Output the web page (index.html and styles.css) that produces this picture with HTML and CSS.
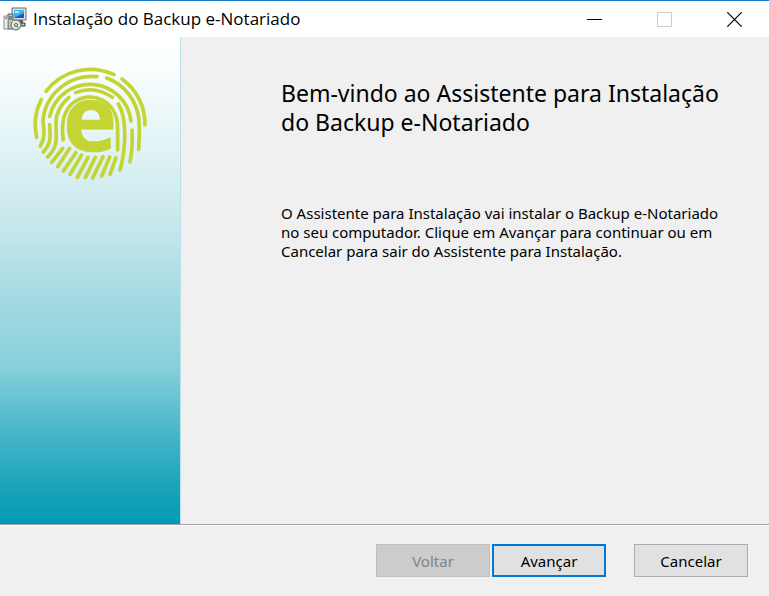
FILE: index.html
```html
<!DOCTYPE html>
<html lang="pt-BR">
<head>
<meta charset="utf-8">
<title>Instalação do Backup e-Notariado</title>
<link rel="stylesheet" href="styles.css">
</head>
<body>
<div class="window">
  <header class="titlebar">
    <svg class="app-icon" viewBox="0 0 24 24" aria-hidden="true">
      <path d="M9 1h14v12H9z" fill="#dfe0e2" stroke="#6a6c70"/>
      <path d="M11 3h10v8H11z" fill="#1457c8"/>
      <path d="M11 3h10v3l-10 5z" fill="#3cb4f8"/>
      <path d="M12 4h4v2h-4z" fill="#a8ecff"/>
      <path d="M16 13h4v3h-4z" fill="#666"/>
      <path d="M13 16h9v3h-9z" fill="#c5c5c5" stroke="#333"/>
      <path d="M5 7h5v15H5z" fill="#c4c4c4" stroke="#555"/>
      <path d="M1 9h4v13H1z" fill="#eee" stroke="#888"/>
      <path d="M2 11h2M6 10h3M6 12h3" stroke="#444"/>
      <circle cx="13" cy="18" r="5" fill="#dbe8df" stroke="#586068"/>
      <path d="M13 18l-4-3 2-2z" fill="#f6e685"/>
      <path d="M13 18l4 3-2 2z" fill="#7ac08b"/>
      <circle cx="13" cy="18" r="1.5" fill="#fff" stroke="#555"/>
    </svg>
    <h1 class="title">Instalação do Backup e-Notariado</h1>
    <div class="window-controls">
      <button class="control" type="button" aria-label="Minimizar"><svg viewBox="0 0 15 15"><path d="M0 7.5h15" stroke="#000"/></svg></button>
      <button class="control" type="button" aria-label="Maximizar" disabled><svg viewBox="0 0 15 15"><path d="M.5.5h14v14H.5z" stroke="#ccc" fill="none"/></svg></button>
      <button class="control" type="button" aria-label="Fechar"><svg viewBox="0 0 15 15"><path d="M.3.3l14.4 14.4M14.7.3L.3 14.7" stroke="#000" stroke-width="1.2"/></svg></button>
    </div>
  </header>
  <main class="content">
    <aside class="banner">
      <svg class="logo" viewBox="0 -54 396 486" role="img" aria-label="e-Notariado">
        <g class="ridges">
          <path d="M66 94A167 167 0 0 1 270 44"/>
          <path d="M294 57A167 167 0 0 1 363 195"/>
          <path d="M52 118A167 167 0 0 0 38 232"/>
          <path d="M219 50A147 147 0 0 0 57 180C57 205 68 225 49 258"/>
          <path d="M248 54A148 148 0 0 1 345 180Q348 225 344 268"/>
          <path d="M77 169A124 124 0 0 1 321 183"/>
          <path d="M77 194C77 225 86 245 58 276"/>
          <path d="M324 210Q327 260 318 306"/>
          <path d="M135 112Q96 145 96 190C96 240 104 256 71 291"/>
          <path d="M155 98Q210 75 265 112"/>
          <path d="M283 132C310 175 306 265 288 330"/>
          <path d="M118 240C112 200 115 155 148 128C200 88 281 120 281 205V270"/>
          <path d="M116 265L83 307M137 265L101 320M156 278L118 333M173 285L138 343M192 292L160 352M214 292L184 353M237 290L206 354M257 291L233 348M276 293L258 343"/>
        </g>
        <text class="logo-letter" x="198" y="274">e</text>
      </svg>
    </aside>
    <section class="page">
      <h2 class="heading">Bem-vindo ao Assistente para Instalação do Backup e-Notariado</h2>
      <p class="message">O Assistente para Instalação vai instalar o Backup e-Notariado no seu computador. Clique em Avançar para continuar ou em Cancelar para sair do Assistente para Instalação.</p>
    </section>
  </main>
  <footer class="actions">
    <button class="button" type="button" disabled>Voltar</button>
    <button class="button primary" type="button">Avançar</button>
    <button class="button cancel" type="button">Cancelar</button>
  </footer>
</div>
</body>
</html>
```
FILE: styles.css
```css
* {
  box-sizing: border-box;
}

body {
  margin: 0;
  background: #f0f0f0;
  color: #000;
  font-family: "Noto Sans", sans-serif;
}

.window {
  display: flex;
  flex-direction: column;
  min-height: 100vh;
  border-top: 1px solid #1979ca;
}

.titlebar {
  display: flex;
  align-items: center;
  height: 36px;
  padding-left: 3px;
  background: #fff;
}

.app-icon {
  width: 24px;
  height: 24px;
}

.title {
  flex: 1;
  margin: 0 0 0 6px;
  font-family: "Open Sans", sans-serif;
  font-size: 17px;
  font-weight: 400;
  line-height: 24px;
}

.window-controls {
  display: flex;
}

.control {
  display: grid;
  place-items: center;
  width: 70px;
  height: 36px;
  padding: 0;
  border: 0;
  background: none;
}

.control svg {
  width: 15px;
  height: 15px;
}

.content {
  display: flex;
  flex: 1;
}

.banner {
  flex: 0 0 181px;
  padding: 5px 24px;
  border-right: 1px solid #b9e0e7;
  background: linear-gradient(#fff 0%, #f8fdfd 8%, #d0ecf0 33%, #86cfda 68%, #45b5c8 82%, #18a3b9 93%, #009bb4 100%);
}

.logo {
  display: block;
  width: 132px;
  height: 162px;
}

.ridges {
  fill: none;
  stroke: #c4d435;
  stroke-width: 11;
  stroke-linecap: round;
}

.logo-letter {
  fill: #c4d435;
  stroke: #c4d435;
  stroke-width: 2;
  font-family: "Open Sans", sans-serif;
  font-size: 274px;
  font-weight: 700;
  text-anchor: middle;
}

.page {
  flex: 1;
  padding: 42px 44px 0 100px;
}

.heading {
  margin: 0 0 67px;
  font-size: 23px;
  font-weight: 400;
  line-height: 29px;
}

.message {
  margin: 0;
  font-size: 15px;
  line-height: 19px;
}

.actions {
  display: flex;
  justify-content: flex-end;
  gap: 2px;
  padding: 19px 21px;
  border-top: 1px solid #a0a0a0;
  box-shadow: inset 0 1px #fff;
}

.button {
  width: 114px;
  height: 33px;
  padding: 0;
  border: 1px solid #adadad;
  background: #e1e1e1;
  color: #000;
  font: 15px/20px "Noto Sans", sans-serif;
}

.button:disabled {
  border-color: #bfbfbf;
  background: #ccc;
  color: #838383;
}

.primary {
  border: 2px solid #0078d7;
}

.cancel {
  margin-left: 26px;
}
```
